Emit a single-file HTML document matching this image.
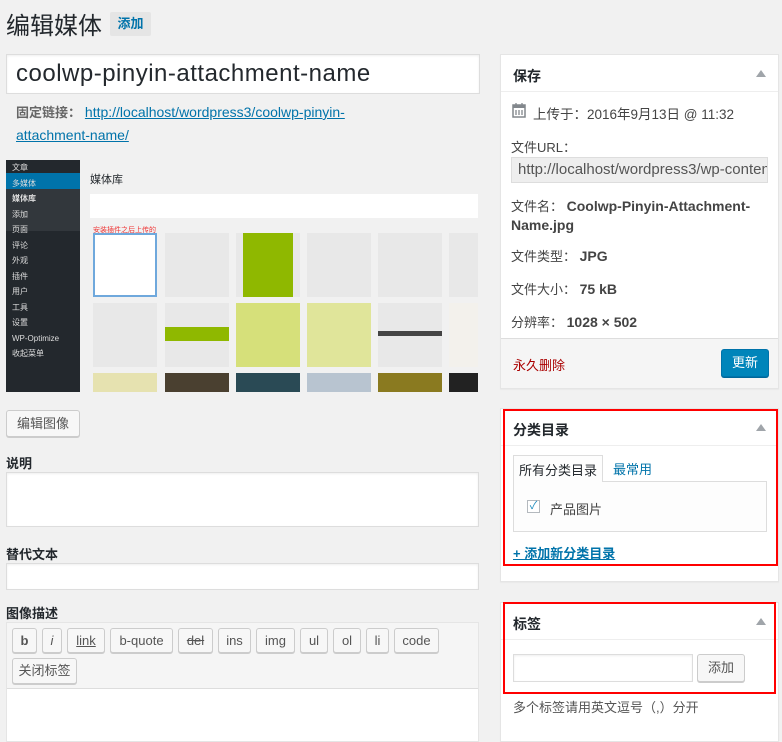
<!DOCTYPE html>
<html><head><meta charset="utf-8"><style>
*{box-sizing:border-box;margin:0;padding:0}
body{width:782px;height:737px;background:#f1f1f1;font-family:"Liberation Sans","Noto Sans CJK SC",sans-serif;color:#23282d;font-size:13px;position:relative;overflow:hidden}
.a{position:absolute}
.btn{position:absolute;background:#f7f7f7;border:1px solid #ccc;border-radius:3px;box-shadow:0 1px 0 #ccc;font-size:13px;color:#555;text-align:center}
.box{position:absolute;background:#fff;border:1px solid #e5e5e5;box-shadow:0 1px 1px rgba(0,0,0,.04)}
.hd{position:absolute;left:0;right:0;top:0;height:37px;border-bottom:1px solid #eee;font-weight:bold;font-size:14px;padding:11px 12px}
.tri{position:absolute;right:12px;top:15px;width:0;height:0;border-left:5px solid transparent;border-right:5px solid transparent;border-bottom:7px solid #a0a5aa}
.lbl{position:absolute;font-weight:bold;font-size:13px;color:#23282d}
.inp{position:absolute;background:#fff;border:1px solid #ddd;box-shadow:inset 0 1px 2px rgba(0,0,0,.07)}
.red{position:absolute;border:2px solid #f00}
.t{position:absolute;font-size:13px;color:#444}
.t b{font-size:14px}
</style></head><body>
<div class="a" style="left:6px;top:6px;font-size:24px;color:#23282d">编辑媒体</div>
<div class="a" style="left:110px;top:12px;width:41px;height:24px;background:#e5e5e5;border-radius:2px;color:#0073aa;font-weight:bold;font-size:13px;text-align:center;line-height:24px">添加</div>
<div class="inp" style="left:6px;top:54px;width:474px;height:40px;font-size:24px;letter-spacing:0.5px;padding:5px 9px;color:#23282d">coolwp-pinyin-attachment-name</div>
<div class="a" style="left:16px;top:101px;font-size:14px;line-height:23px;width:400px;color:#666"><b style="font-size:13px">固定链接：</b> <span style="color:#0073aa;text-decoration:underline">http://localhost/wordpress3/coolwp-pinyin-<br>attachment-name/</span></div>
<!-- screenshot image -->
<div class="a" style="left:6px;top:160px;width:472px;height:232px;background:#f1f1f1;overflow:hidden">
 <div class="a" style="left:0;top:0;width:74px;height:232px;background:#23282d"></div>
 <div class="a" style="left:0;top:13px;width:74px;height:16px;background:#0073aa"></div>
 <div class="a" style="left:0;top:29px;width:74px;height:42px;background:#32373c"></div>
 <div class="a" style="left:6px;top:0;font-size:8px;color:#ddd;line-height:15.5px">文章<br>多媒体<br><b>媒体库</b><br>添加<br>页面<br>评论<br>外观<br>插件<br>用户<br>工具<br>设置<br>WP-Optimize<br>收起菜单</div>
 <div class="a" style="left:84px;top:11px;font-size:11px;color:#23282d">媒体库</div>
 <div class="a" style="left:84px;top:34px;width:388px;height:24px;background:#fff"></div>
 <div class="a" style="left:87px;top:65px;font-size:7px;color:#e33">安装插件之后上传的</div>
 <div class="a" style="left:87px;top:73px;width:64px;height:64px;background:#fff;border:2px solid #6fa8dc"></div>
 <div class="a" style="left:159px;top:73px;width:64px;height:64px;background:#e8e8e8"></div>
 <div class="a" style="left:230px;top:73px;width:64px;height:64px;background:#e8e8e8"></div>
 <div class="a" style="left:237px;top:73px;width:50px;height:64px;background:#8fb800"></div>
 <div class="a" style="left:301px;top:73px;width:64px;height:64px;background:#e8e8e8"></div>
 <div class="a" style="left:372px;top:73px;width:64px;height:64px;background:#e8e8e8"></div>
 <div class="a" style="left:443px;top:73px;width:64px;height:64px;background:#e8e8e8"></div>
 <div class="a" style="left:87px;top:143px;width:64px;height:64px;background:#e8e8e8"></div>
 <div class="a" style="left:159px;top:143px;width:64px;height:64px;background:#e8e8e8"></div>
 <div class="a" style="left:159px;top:167px;width:64px;height:14px;background:#8fb800"></div>
 <div class="a" style="left:230px;top:143px;width:64px;height:64px;background:#d6e07a"></div>
 <div class="a" style="left:301px;top:143px;width:64px;height:64px;background:#e0e59a"></div>
 <div class="a" style="left:372px;top:143px;width:64px;height:64px;background:#e8e8e8"></div>
 <div class="a" style="left:372px;top:171px;width:64px;height:5px;background:#444"></div>
 <div class="a" style="left:443px;top:143px;width:64px;height:64px;background:#f3f1ec"></div>
 <div class="a" style="left:87px;top:213px;width:64px;height:20px;background:#e6e2b0"></div>
 <div class="a" style="left:159px;top:213px;width:64px;height:20px;background:#4a4030"></div>
 <div class="a" style="left:230px;top:213px;width:64px;height:20px;background:#2a4a55"></div>
 <div class="a" style="left:301px;top:213px;width:64px;height:20px;background:#b8c4d0"></div>
 <div class="a" style="left:372px;top:213px;width:64px;height:20px;background:#8a7a20"></div>
 <div class="a" style="left:443px;top:213px;width:64px;height:20px;background:#222"></div>
</div>
<div class="btn" style="left:6px;top:410px;width:74px;height:27px;line-height:25px">编辑图像</div>
<div class="lbl" style="left:6px;top:453px">说明</div>
<div class="inp" style="left:6px;top:472px;width:473px;height:55px"></div>
<div class="lbl" style="left:6px;top:544px">替代文本</div>
<div class="inp" style="left:6px;top:563px;width:473px;height:27px"></div>
<div class="lbl" style="left:6px;top:603px">图像描述</div>
<div class="a" style="left:6px;top:622px;width:473px;height:120px;background:#fff;border:1px solid #e5e5e5"></div>
<div class="a" style="left:7px;top:623px;width:471px;height:66px;background:#f5f5f5;border-bottom:1px solid #ddd"></div>
<div class="btn" style="left:12px;top:628px;width:25px;height:25px;line-height:23px;font-weight:bold">b</div>
<div class="btn" style="left:42px;top:628px;width:20px;height:25px;line-height:23px;font-style:italic">i</div>
<div class="btn" style="left:67px;top:628px;width:38px;height:25px;line-height:23px;text-decoration:underline">link</div>
<div class="btn" style="left:110px;top:628px;width:63px;height:25px;line-height:23px">b-quote</div>
<div class="btn" style="left:178px;top:628px;width:35px;height:25px;line-height:23px;text-decoration:line-through">del</div>
<div class="btn" style="left:218px;top:628px;width:33px;height:25px;line-height:23px">ins</div>
<div class="btn" style="left:256px;top:628px;width:39px;height:25px;line-height:23px">img</div>
<div class="btn" style="left:300px;top:628px;width:28px;height:25px;line-height:23px">ul</div>
<div class="btn" style="left:333px;top:628px;width:28px;height:25px;line-height:23px">ol</div>
<div class="btn" style="left:366px;top:628px;width:23px;height:25px;line-height:23px">li</div>
<div class="btn" style="left:394px;top:628px;width:45px;height:25px;line-height:23px">code</div>
<div class="btn" style="left:12px;top:658px;width:65px;height:26px;line-height:24px">关闭标签</div>

<!-- Save box -->
<div class="box" style="left:500px;top:54px;width:279px;height:335px">
 <div class="hd">保存</div><div class="tri"></div>
 <div class="a" style="left:0;right:0;top:283px;bottom:0;background:#f5f5f5;border-top:1px solid #ddd"></div>
</div>
<svg class="a" style="left:512px;top:102px" width="14" height="16" viewBox="0 0 14 16"><rect x="1" y="3" width="12" height="12" fill="none" stroke="#82878c" stroke-width="1.5"/><rect x="1" y="3" width="12" height="3" fill="#82878c"/><path d="M4 1v3M10 1v3M4 8v5M7 8v5M10 8v5" stroke="#82878c" stroke-width="1.3"/></svg>
<div class="t" style="left:533px;top:103px;font-size:13.5px">上传于：2016年9月13日 @ 11:32</div>
<div class="t" style="left:511px;top:137px">文件URL：</div>
<div class="a" style="left:511px;top:157px;width:257px;height:26px;background:#eee;border:1px solid #ddd;font-size:15px;color:#555;padding:3px 6px;overflow:hidden;white-space:nowrap">http://localhost/wordpress3/wp-content</div>
<div class="t" style="left:511px;top:197px;line-height:18px;width:260px">文件名： <b>Coolwp-Pinyin-Attachment-<br>Name.jpg</b></div>
<div class="t" style="left:511px;top:246px">文件类型： <b>JPG</b></div>
<div class="t" style="left:511px;top:279px">文件大小： <b>75 kB</b></div>
<div class="t" style="left:511px;top:312px">分辨率： <b>1028 × 502</b></div>
<div class="t" style="left:513px;top:355px;color:#a00">永久删除</div>
<div class="a" style="left:721px;top:349px;width:48px;height:28px;background:#0085ba;border:1px solid #0073aa;border-radius:3px;box-shadow:0 1px 0 #006799;color:#fff;text-align:center;line-height:26px;font-size:13px">更新</div>

<!-- Category -->
<div class="box" style="left:500px;top:408px;width:279px;height:174px">
 <div class="hd">分类目录</div><div class="tri"></div>
</div>
<div class="a" style="left:513px;top:481px;width:254px;height:51px;border:1px solid #ddd;background:#fdfdfd"></div>
<div class="a" style="left:513px;top:455px;width:90px;height:27px;border:1px solid #ddd;border-bottom:none;background:#fdfdfd;font-size:13px;padding:4px 5px">所有分类目录</div>
<div class="a" style="left:613px;top:459px;color:#0073aa">最常用</div>
<div class="a" style="left:527px;top:500px;width:13px;height:13px;border:1px solid #b4b9be;background:#fff;font-size:11px;color:#1e8cbe;line-height:11px;text-align:center">✓</div>
<div class="t" style="left:550px;top:499px">产品图片</div>
<div class="a" style="left:513px;top:543px;color:#0073aa;font-weight:bold;text-decoration:underline">+ 添加新分类目录</div>
<div class="red" style="left:503px;top:409px;width:275px;height:157px"></div>

<!-- Tags -->
<div class="box" style="left:500px;top:602px;width:279px;height:140px">
 <div class="hd">标签</div><div class="tri"></div>
</div>
<div class="inp" style="left:513px;top:654px;width:180px;height:28px"></div>
<div class="btn" style="left:697px;top:654px;width:48px;height:28px;line-height:26px">添加</div>
<div class="t" style="left:513px;top:697px;color:#555">多个标签请用英文逗号（,）分开</div>
<div class="red" style="left:503px;top:602px;width:273px;height:92px"></div>
</body></html>
